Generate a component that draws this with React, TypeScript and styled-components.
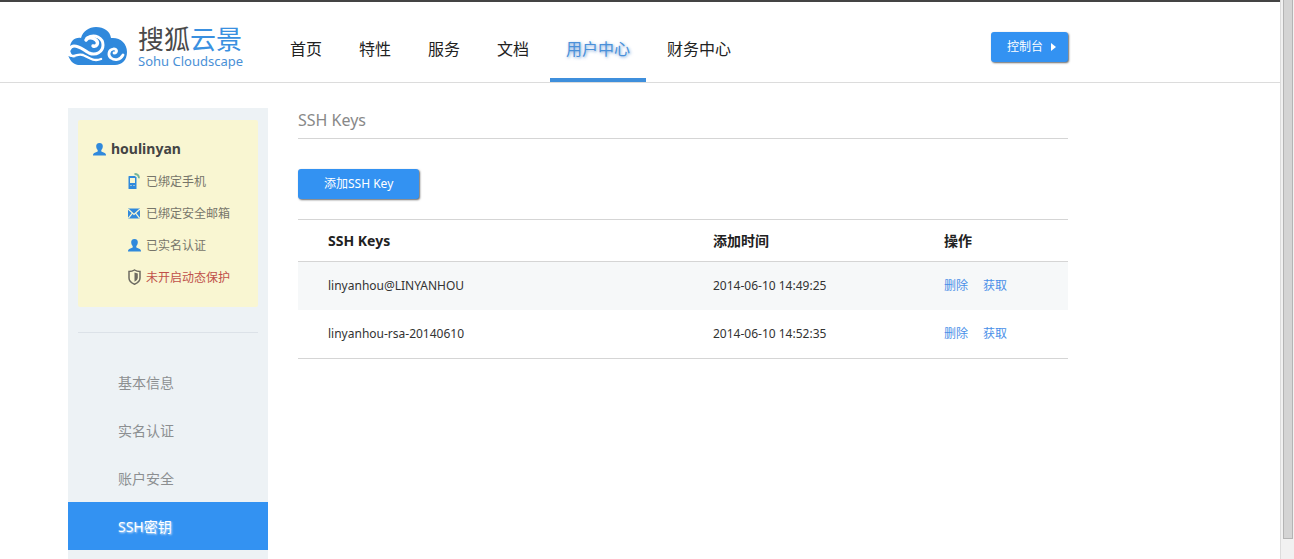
import React from "react";
import styled, { createGlobalStyle, css } from "styled-components";

const BLUE = "#3392f2";

const GlobalStyle = createGlobalStyle`
  *, *::before, *::after { box-sizing: border-box; }
  body {
    margin: 0;
    background: #fff;
    color: #333;
    font: 12px/20px "Noto Sans", "Noto Sans CJK SC", sans-serif;
  }
  a { text-decoration: none; color: inherit; }
  h1, h2, ul { margin: 0; padding: 0; }
  ul { list-style: none; }
`;

const Shell = styled.div`
  display: flex;
  min-height: 100vh;
`;

const Page = styled.div`
  flex: 1;
  min-width: 0;
  display: flex;
  flex-direction: column;
  border-top: 2px solid #444;
`;

const ScrollTrack = styled.div`
  width: 14px;
  padding: 0 1px 20px 2px;
  border-left: 1px solid #dcdcdc;
  background: #f1f1f1;
  display: flex;
`;

const ScrollThumb = styled.div`
  flex: 1;
  background: #d4d4d4;
  border: 1px solid #b4b4b4;
  border-top: 0;
`;

const container = css`
  width: 100%;
  max-width: 1068px;
  padding-left: 68px;
`;

const Header = styled.header`
  border-bottom: 1px solid #dcdcdc;
`;

const HeaderInner = styled.div`
  ${container}
  height: 80px;
  display: flex;
  align-items: stretch;
`;

const Brand = styled.a`
  width: 206px;
  padding-top: 24px;
  display: flex;
  align-items: flex-start;
  gap: 10px;
`;

const BrandText = styled.span`
  display: flex;
  flex-direction: column;
  white-space: nowrap;
  font-family: "Liberation Sans", "Noto Sans CJK SC", sans-serif;
`;

const BrandName = styled.span`
  font-size: 26px;
  line-height: 29px;
  color: #4a4a4a;
`;

const BrandAccent = styled.span`
  color: #3a90e0;
`;

const BrandLatin = styled.span`
  font-family: "Noto Sans", sans-serif;
  font-size: 13px;
  line-height: 13px;
  color: #4a90d6;
`;

const Nav = styled.nav`
  flex: 1;
  display: flex;
  gap: 5px;
`;

const NavLink = styled.a<{ $active?: boolean }>`
  padding: 14px 16px 0;
  line-height: 66px;
  height: 80px;
  font-size: 16px;
  white-space: nowrap;
  color: ${(p) => (p.$active ? "#4a90d9" : "#222")};
  border-bottom: 4px solid ${(p) => (p.$active ? "#3f8fdc" : "transparent")};
  ${(p) => p.$active && "text-shadow: 1px 1px 3px rgba(51, 120, 200, 0.7);"}
`;

const Button = styled.button<{ $wide?: boolean }>`
  height: 30px;
  padding: ${(p) => (p.$wide ? "0 26px" : "0 12px 0 16px")};
  display: inline-flex;
  align-items: center;
  justify-content: center;
  gap: 8px;
  border: 0;
  border-radius: 3px;
  background: ${BLUE};
  color: #fff;
  font: inherit;
  white-space: nowrap;
  box-shadow: 1px 1px 2px rgba(0, 0, 0, 0.6);
`;

const HeaderAction = styled.div`
  padding-top: 30px;
`;

const Body = styled.div`
  ${container}
  flex: 1;
  display: flex;
  gap: 30px;
  padding-top: 25px;
`;

const Sidebar = styled.aside`
  flex: 0 0 200px;
  padding: 12px 0 0;
  background: #edf2f5;
`;

const Profile = styled.section`
  margin: 0 10px;
  padding: 13px 15px 14px;
  background: #f9f6d2;
  border-radius: 2px;
`;

const ProfileRow = styled.li`
  display: flex;
  align-items: center;
  gap: 5px;
  height: 32px;
`;

const UserName = styled.h2`
  display: flex;
  align-items: center;
  gap: 5px;
  height: 32px;
  font-size: 14px;
  color: #444;
`;

const StatusList = styled.ul`
  padding-left: 35px;
`;

const StatusText = styled.span<{ $warn?: boolean }>`
  padding-top: 2px;
  color: ${(p) => (p.$warn ? "#c0504a" : "#77756a")};
`;

const Divider = styled.hr`
  margin: 25px 10px;
  border: 0;
  border-top: 1px solid #dce2e8;
`;

const MenuLink = styled.a<{ $active?: boolean }>`
  display: block;
  padding: 2px 0 0 50px;
  font-size: 14px;
  line-height: 46px;
  color: ${(p) => (p.$active ? "#fff" : "#8c8f91")};
  ${(p) =>
    p.$active &&
    css`
      background: ${BLUE};
      text-shadow: 1px 1px 2px rgba(255, 255, 255, 0.8);
    `}
`;

const Main = styled.main`
  flex: 1;
  min-width: 0;
`;

const Title = styled.h1`
  height: 31px;
  margin-bottom: 30px;
  border-bottom: 1px solid #d5d5d5;
  font-size: 16px;
  font-weight: 400;
  line-height: 24px;
  color: #888;
`;

const KeyTable = styled.table`
  width: 100%;
  margin-top: 20px;
  table-layout: fixed;
  border-collapse: separate;
  border-spacing: 0;
  border-top: 1px solid #d5d5d5;
  border-bottom: 1px solid #d5d5d5;
  th, td {
    padding: 0 0 0 30px;
    text-align: left;
    white-space: nowrap;
  }
  th {
    height: 42px;
    font-size: 14px;
    color: #222;
    border-bottom: 1px solid #d5d5d5;
  }
  td { height: 48px; }
`;

const KeyRow = styled.tr`
  &:nth-child(odd) { background: #f6f8f9; }
`;

const Th = styled.th<{ $share: number }>`
  width: ${(p) => p.$share}%;
`;

const Actions = styled.div`
  display: flex;
  gap: 15px;
  color: #4a8fe8;
`;

const CloudLogo = () => (
  <svg width="60" height="40" viewBox="0 0 60 40" aria-hidden="true">
    <path
      fill="#3089dc"
      d="M10 39 C5 38 1 34 0 28 C2 31 5 32 8 31 C4 30 2 27 2 22 C2 15 7 11 13 12 C15 5 21 1 28 1 C36 1 42 5 43 12 C52 11 59 17 59 26 C59 34 54 39 47 39 Z"
    />
    <g fill="none" stroke="#fff" strokeLinecap="round">
      <path strokeWidth="3.4" d="M25 20 C29 21 31 17 28 14 C25 11 20 11 18 14" />
      <path strokeWidth="3" d="M19 12 C27 7 35 12 35 19 C35 26 28 30 21 27 C15 24 12 20 6 20 C4 20 2 22 1 24" />
      <path strokeWidth="2.4" d="M1 29 C6 32 9 27 15 29 C20 31 25 36 33 33" />
      <path strokeWidth="2.800" d="M46 27 C50 27 49 22 45 23 C40 24 40 30 43 32 C47 35 52 34 55 29" />
    </g>
  </svg>
);

const PersonIcon = () => (
  <svg width="13" height="13" viewBox="0 0 13 13" aria-hidden="true">
    <path
      fill="#3089dc"
      d="M6.500 0 C8.900 0 10 1.500 9.800 3.600 C9.700 5.400 8.900 6.400 8.300 7.100 V8.600 L11.800 10 C12.600 10.400 13 11.200 13 12.500 H0 C0 11.200 .4 10.400 1.200 10 L4.700 8.600 V7.100 C4.100 6.400 3.300 5.400 3.200 3.600 C3 1.500 4.100 0 6.500 0Z"
    />
  </svg>
);

const PhoneIcon = () => (
  <svg width="13" height="16" viewBox="0 0 13 16" aria-hidden="true">
    <path fill="#3089dc" fillRule="evenodd" d="M1 3H7.500V4H8.500V16H1Q.5 16 .5 15.500V3.500Q.5 3 1 3ZM2 5V10H7V5ZM2.500 12V13H3.500V12ZM5.500 12V13H6.500V12Z" />
    <path fill="none" stroke="#74b49a" strokeWidth="1.800" d="M6.500 1Q10.800 1 11 5.200" />
  </svg>
);

const MailIcon = () => (
  <svg width="13" height="11" viewBox="0 0 13 11" aria-hidden="true">
    <rect y="0.500" width="12" height="10" fill="#3089dc" />
    <path fill="none" stroke="#f9f6d2" strokeWidth="1.200" d="M0 1L6 6.500L12 1M.3 10.300L4.200 5.300M11.700 10.300L7.800 5.300" />
  </svg>
);

const ShieldIcon = () => (
  <svg width="13" height="16" viewBox="0 0 13 16" aria-hidden="true">
    <path fill="none" stroke="#6d6b62" strokeWidth="1.500" d="M6.500 1C8 2 10 2.500 12 2.500V9C12 12 9.500 14 6.500 15.200C3.500 14 1 12 1 9V2.500C3 2.500 5 2 6.500 1Z" />
    <path fill="#6d6b62" d="M6.500 3.500Q8 4.200 9.800 4.500V9Q9.800 11.200 6.500 12.700Z" />
  </svg>
);

const nav = ["首页", "特性", "服务", "文档", "用户中心", "财务中心"];
const menu = ["基本信息", "实名认证", "账户安全", "SSH密钥"];
const statuses = [
  { icon: <PhoneIcon />, text: "已绑定手机" },
  { icon: <MailIcon />, text: "已绑定安全邮箱" },
  { icon: <PersonIcon />, text: "已实名认证" },
  { icon: <ShieldIcon />, text: "未开启动态保护", warn: true },
];
const keys = [
  { name: "linyanhou@LINYANHOU", added: "2014-06-10 14:49:25" },
  { name: "linyanhou-rsa-20140610", added: "2014-06-10 14:52:35" },
];

export default function App() {
  return (
    <>
      <GlobalStyle />
      <Shell>
        <Page>
          <Header>
            <HeaderInner>
              <Brand href="#">
                <CloudLogo />
                <BrandText>
                  <BrandName>
                    搜狐<BrandAccent>云景</BrandAccent>
                  </BrandName>
                  <BrandLatin>Sohu Cloudscape</BrandLatin>
                </BrandText>
              </Brand>
              <Nav>
                {nav.map((label) => (
                  <NavLink key={label} href="#" $active={label === "用户中心"}>
                    {label}
                  </NavLink>
                ))}
              </Nav>
              <HeaderAction>
                <Button type="button">
                  控制台
                  <svg width="5" height="8" viewBox="0 0 5 8" aria-hidden="true">
                    <path fill="#fff" d="M0 0L5 4L0 8Z" />
                  </svg>
                </Button>
              </HeaderAction>
            </HeaderInner>
          </Header>
          <Body>
            <Sidebar>
              <Profile>
                <UserName>
                  <PersonIcon />
                  houlinyan
                </UserName>
                <StatusList>
                  {statuses.map((s) => (
                    <ProfileRow key={s.text}>
                      {s.icon}
                      <StatusText $warn={s.warn}>{s.text}</StatusText>
                    </ProfileRow>
                  ))}
                </StatusList>
              </Profile>
              <Divider />
              <nav>
                {menu.map((label) => (
                  <MenuLink key={label} href="#" $active={label === "SSH密钥"}>
                    {label}
                  </MenuLink>
                ))}
              </nav>
            </Sidebar>
            <Main>
              <Title>SSH Keys</Title>
              <Button type="button" $wide>
                添加SSH Key
              </Button>
              <KeyTable>
                <thead>
                  <tr>
                    <Th $share={50}>SSH Keys</Th>
                    <Th $share={30}>添加时间</Th>
                    <Th $share={20}>操作</Th>
                  </tr>
                </thead>
                <tbody>
                  {keys.map((k) => (
                    <KeyRow key={k.name}>
                      <td>{k.name}</td>
                      <td>{k.added}</td>
                      <td>
                        <Actions>
                          <a href="#">删除</a>
                          <a href="#">获取</a>
                        </Actions>
                      </td>
                    </KeyRow>
                  ))}
                </tbody>
              </KeyTable>
            </Main>
          </Body>
        </Page>
        <ScrollTrack>
          <ScrollThumb />
        </ScrollTrack>
      </Shell>
    </>
  );
}
